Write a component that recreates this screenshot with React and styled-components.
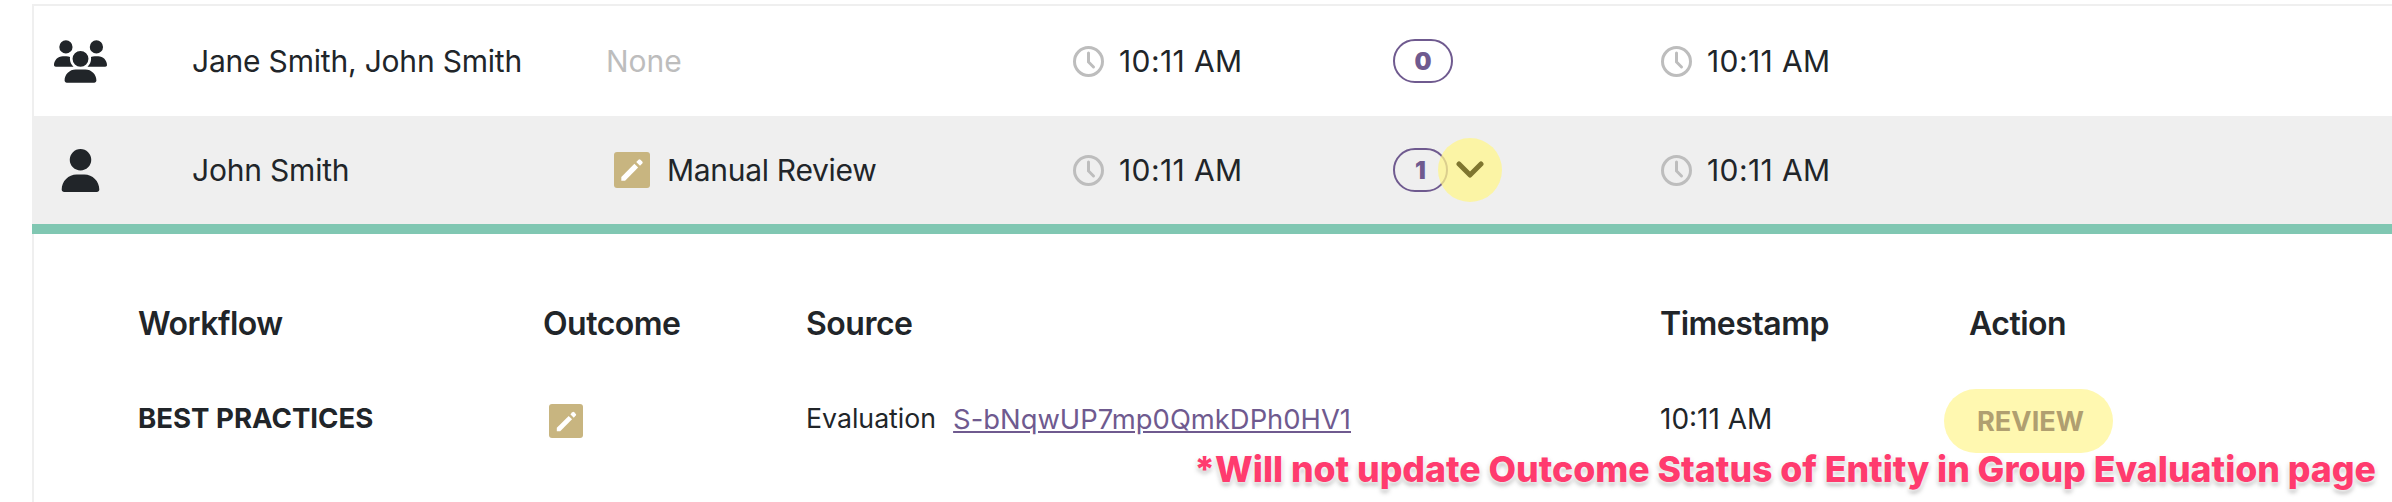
import React from "react";
import styled, { createGlobalStyle } from "styled-components";
import { FaUser, FaUsers } from "react-icons/fa6";

const GlobalStyle = createGlobalStyle`
  html, body {
    margin: 0;
    background: #fff;
    overflow: hidden;
  }
  body {
    font-family: Inter, "Liberation Sans", sans-serif;
    color: #212529;
  }
`;

const Page = styled.div`
  position: relative;
  width: 2392px;
  height: 502px;
  overflow: hidden;
  padding: 4px 0 0 32px;
  box-sizing: border-box;
`;

const TopLine = styled.div`
  height: 2px;
  background: #efefef;
`;

const Row = styled.div`
  display: grid;
  grid-template-columns: 158px 414px 467px 320px 268px 1fr;
  align-items: center;
  height: ${({ $selected }) => ($selected ? "108px" : "110px")};
  border-left: 2px solid #efefef;
  background: ${({ $selected }) => ($selected ? "#efefef" : "#fff")};
`;

const PersonIcon = styled.div`
  display: flex;
  justify-content: center;
  width: 93px;
  font-size: ${({ $size }) => $size}px;
  color: #212529;
`;

const Name = styled.div`
  font-size: 30px;
  letter-spacing: -0.2px;
`;

const Muted = styled.div`
  font-size: 30px;
  color: #bdbdbd;
`;

const OutcomeCell = styled.div`
  display: flex;
  align-items: center;
  gap: 17px;
  margin-left: 8px;
  font-size: 30px;
  letter-spacing: -0.3px;
`;

const EditBox = styled.span`
  display: inline-flex;
  align-items: center;
  justify-content: center;
  width: ${({ $size }) => $size}px;
  height: ${({ $size }) => $size}px;
  border-radius: 3px;
  background: #c8b580;
`;

const TimeCell = styled.div`
  display: flex;
  align-items: center;
  gap: 15px;
  font-size: 30px;
  letter-spacing: 0.4px;
`;

const CountCell = styled.div`
  display: flex;
  align-items: center;
`;

const CountBadge = styled.div`
  display: flex;
  align-items: center;
  justify-content: center;
  box-sizing: border-box;
  width: ${({ $open }) => ($open ? "55px" : "60px")};
  height: 44px;
  border: 2px solid #6f5a8f;
  border-radius: 22px;
  color: #6f5a8f;
  font-size: 24px;
  font-weight: 900;
`;

const ExpandButton = styled.div`
  display: flex;
  align-items: center;
  justify-content: center;
  width: 64px;
  height: 64px;
  margin-left: -10px;
  border-radius: 50%;
  background: rgba(255, 245, 140, 0.75);
`;

const AccentBar = styled.div`
  height: 10px;
  background: #80c7b2;
`;

const Details = styled.div`
  height: 268px;
  padding: 70px 0 0 104px;
  border-left: 2px solid #efefef;
  box-sizing: border-box;
`;

const DetailGrid = styled.div`
  display: grid;
  grid-template-columns: 405px 263px 854px 309px 1fr;
  grid-auto-rows: auto;
  row-gap: 46px;
  align-items: center;
`;

const HeadCell = styled.div`
  font-size: 32px;
  font-weight: 600;
  letter-spacing: -0.5px;
`;

const WorkflowName = styled.div`
  font-size: 27.6px;
  font-weight: 700;
  text-transform: uppercase;
  margin-bottom: 6px;
`;

const DetailIcon = styled.div`
  display: flex;
  margin-left: 6px;
`;

const SourceCell = styled.div`
  display: flex;
  gap: 17px;
  font-size: 26.7px;
  margin-bottom: 5px;
`;

const SourceLink = styled.a`
  color: #6f5a8f;
  font-size: 27.4px;
  text-decoration: underline;
`;

const DetailTime = styled.div`
  font-size: 28px;
  margin-bottom: 5px;
`;

const ReviewButton = styled.div`
  display: flex;
  align-items: center;
  justify-content: center;
  box-sizing: border-box;
  width: 169px;
  height: 64px;
  margin-left: -25px;
  padding-left: 4px;
  border-radius: 32px;
  background: #fff8b0;
  color: #b09f70;
  font-size: 27.2px;
  font-weight: 700;
`;

const Annotation = styled.div`
  position: absolute;
  right: 16px;
  top: 447px;
  color: #ff3b6e;
  font-size: 35.65px;
  font-weight: 800;
  white-space: nowrap;
  text-shadow: 0 0 4px #fff, 0 0 4px #fff, 0 3px 5px rgba(0, 0, 0, 0.35);
`;

const ClockIcon = () => (
  <svg width="31" height="31" viewBox="0 0 31 31" fill="none" stroke="#bdbdbd" strokeWidth="3" strokeLinecap="round">
    <circle cx="15.5" cy="15.5" r="14" />
    <path d="M15.5 7v9l5 5" />
  </svg>
);

const PencilIcon = ({ size }) => (
  <svg width={size} height={size} viewBox="0 0 24 24" fill="#fff">
    <path d="M4 17.2V20h2.8L16.6 10.2 13.8 7.4z" />
    <path d="M15.2 6 18 8.8 19.7 7.1a1 1 0 0 0 0-1.4L18.3 4.3a1 1 0 0 0-1.4 0z" />
  </svg>
);

const ChevronIcon = () => (
  <svg width="28" height="18" viewBox="0 0 28 18" fill="none" stroke="#7f7630" strokeWidth="5" strokeLinecap="round" strokeLinejoin="round">
    <path d="M3 3l11 11L25 3" />
  </svg>
);

const Time = () => (
  <TimeCell>
    <ClockIcon />
    10:11 AM
  </TimeCell>
);

function App() {
  return (
    <Page>
      <GlobalStyle />
      <TopLine />
      <Row>
        <PersonIcon $size={53}><FaUsers /></PersonIcon>
        <Name>Jane Smith, John Smith</Name>
        <Muted>None</Muted>
        <Time />
        <CountCell>
          <CountBadge>0</CountBadge>
        </CountCell>
        <Time />
      </Row>
      <Row $selected>
        <PersonIcon $size={43}><FaUser /></PersonIcon>
        <Name>John Smith</Name>
        <OutcomeCell>
          <EditBox $size={36}><PencilIcon size={32} /></EditBox>
          Manual Review
        </OutcomeCell>
        <Time />
        <CountCell>
          <CountBadge $open>1</CountBadge>
          <ExpandButton><ChevronIcon /></ExpandButton>
        </CountCell>
        <Time />
      </Row>
      <AccentBar />
      <Details>
        <DetailGrid>
          <HeadCell>Workflow</HeadCell>
          <HeadCell>Outcome</HeadCell>
          <HeadCell>Source</HeadCell>
          <HeadCell>Timestamp</HeadCell>
          <HeadCell>Action</HeadCell>
          <WorkflowName>Best Practices</WorkflowName>
          <DetailIcon>
            <EditBox $size={34}><PencilIcon size={29} /></EditBox>
          </DetailIcon>
          <SourceCell>
            Evaluation
            <SourceLink href="#">S-bNqwUP7mp0QmkDPh0HV1</SourceLink>
          </SourceCell>
          <DetailTime>10:11 AM</DetailTime>
          <ReviewButton>REVIEW</ReviewButton>
        </DetailGrid>
      </Details>
      <Annotation>*Will not update Outcome Status of Entity in Group Evaluation page</Annotation>
    </Page>
  );
}

export default App;
